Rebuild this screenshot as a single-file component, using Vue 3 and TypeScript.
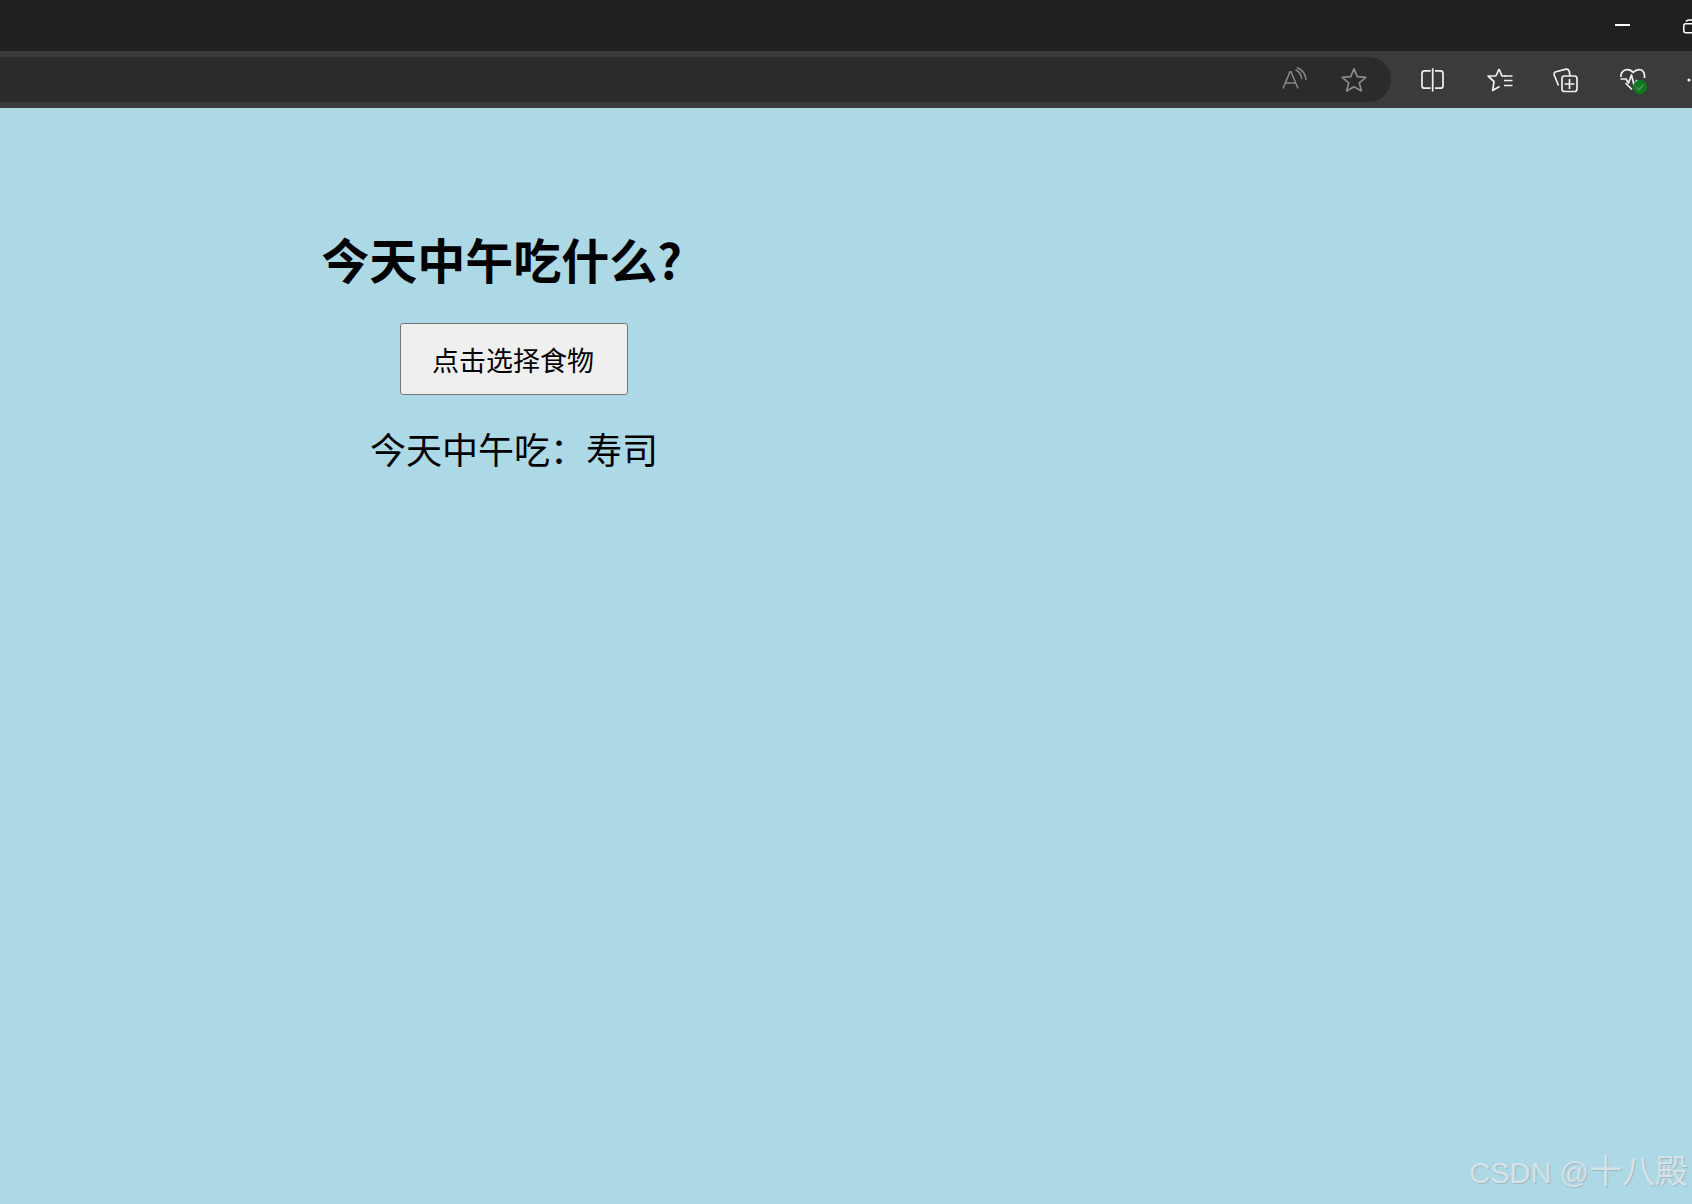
<script setup lang="ts">
const title = '今天中午吃什么?'
const food = '寿司'
const colon = '\uFF1A'
</script>

<template>
  <div class="window">
    <header class="titlebar">
      <span class="minimize"></span>
      <svg class="restore" width="9" height="16" viewBox="0 0 9 16" fill="none" stroke="#fff" stroke-width="1.5">
        <rect x="0.8" y="4.800" width="20" height="9" rx="2" />
        <path d="M3 2.500q1-1.600 3-1.600h6" />
      </svg>
    </header>
    <nav class="toolbar">
      <div class="address">
        <svg class="pill-icon" width="28" height="28" viewBox="0 0 28 28" fill="none" stroke="#8a8a8a" stroke-width="1.500">
          <path d="M3 22.500 10 5.800h1L18 22.500M5.500 17h10.500" />
          <path d="M16 4q5 2.500 5.700 8.500M17.300 1.800q7.500 3 8.700 11.500" stroke-linecap="round" />
        </svg>
        <svg class="pill-icon star" width="28" height="28" viewBox="0 0 28 28" fill="none" stroke="#8a8a8a" stroke-width="1.700" stroke-linejoin="round">
          <path d="M14 2.800 17.300 10.600 25.800 11.400 19.300 16.900 21.400 25 14 20.800 6.600 25 8.700 16.900 2.200 11.400 10.700 10.600Z" />
        </svg>
      </div>
      <div class="tools">
        <svg width="28" height="28" viewBox="0 0 28 28" fill="none" stroke="#f0f0f0" stroke-width="1.700">
          <path d="M12.700 4.800H6.500Q4 4.800 4 7.300V19.700Q4 22.200 6.500 22.200H12.700M17 4.800H22.500Q25 4.800 25 7.300V19.700Q25 22.200 22.500 22.200H17M14.700 2.200V25.500" />
        </svg>
        <svg class="fav" width="28" height="28" viewBox="0 0 28 28" fill="none" stroke="#f0f0f0" stroke-width="1.700" stroke-linejoin="round">
          <path d="M13 3 16 10H19.500M10 10H2L8 15.500 6.700 24.500 13.500 20.500M13 3 10 10" />
          <path d="M18 10H26.500M18 14.500H26.500M18 19.500H26.500" />
        </svg>
        <svg class="coll" width="28" height="28" viewBox="0 0 28 28" fill="none" stroke="#f0f0f0" stroke-width="1.700">
          <path d="M7.500 19.500 3.200 9Q2.500 6.500 5 5.800L15 3.200Q17.500 2.800 18.300 5.500L19 10" />
          <rect x="11" y="10" width="15" height="15.500" rx="2.500" fill="#3b3b3b" />
          <path d="M18.500 13V23M13.500 18H23.500" />
        </svg>
        <span class="health">
          <svg width="28" height="28" viewBox="0 0 28 28" fill="none" stroke="#f0f0f0" stroke-width="1.700" stroke-linejoin="round">
            <path d="M2 11Q1.500 6 6 4 11 2.500 14 6.500 18 2.500 22.500 4 26 6 25.500 12M6.500 17 13 23.500M1.500 13H7L9.500 17 12.500 9 15 19 18 14" />
          </svg>
          <span class="badge">
            <svg width="14" height="14" viewBox="0 0 14 14" fill="none" stroke="#4f8a55" stroke-width="1.800">
              <path d="M3.500 7.500 6 10 10.500 4.500" />
            </svg>
          </span>
        </span>
        <svg width="28" height="28" viewBox="0 0 28 28" fill="#f0f0f0">
          <circle cx="3" cy="14" r="1.600" />
          <circle cx="12" cy="14" r="1.600" />
          <circle cx="21" cy="14" r="1.600" />
        </svg>
      </div>
    </nav>
    <main class="page">
      <section class="content">
        <h1 class="heading">{{ title }}</h1>
        <button class="pick" type="button">点击选择食物</button>
        <p class="result">今天中午吃{{ colon }}{{ food }}</p>
      </section>
      <span class="watermark"><span class="mark-latin">CSDN @</span>十八殿</span>
    </main>
  </div>
</template>

<style>
html,
body {
  margin: 0;
  overflow: hidden;
}
</style>

<style scoped>
.window {
  width: 1692px;
  height: 1204px;
  display: flex;
  flex-direction: column;
  overflow: hidden;
  font-family: "Noto Sans CJK SC", "Liberation Sans", sans-serif;
}
.titlebar {
  height: 51px;
  flex: none;
  background: #202020;
  display: flex;
  align-items: center;
  justify-content: flex-end;
  gap: 53px;
  box-sizing: border-box;
}
.minimize {
  width: 15px;
  height: 2px;
  background: #fff;
  margin-bottom: 2px;
}
.restore {
  flex: none;
  margin-top: 2px;
}
.toolbar {
  height: 57px;
  flex: none;
  background: #3b3b3b;
  display: flex;
  align-items: center;
  overflow: hidden;
}
.address {
  width: 1391px;
  height: 45px;
  flex: none;
  box-sizing: border-box;
  background: #2b2b2b;
  border-radius: 0 23px 23px 0;
  display: flex;
  align-items: center;
  justify-content: flex-end;
  gap: 32px;
  padding-right: 23px;
}
.pill-icon {
  flex: none;
}
.tools {
  display: flex;
  align-items: center;
  gap: 39px;
  padding-left: 27px;
}
.tools > svg {
  flex: none;
}
.tools > .fav {
  margin-left: 1px;
}
.tools > .coll {
  margin-left: -2px;
}
.health {
  position: relative;
  width: 28px;
  height: 28px;
  flex: none;
  margin-left: 1px;
}
.health > svg {
  display: block;
}
.badge {
  position: absolute;
  right: 0;
  bottom: 0;
  width: 14px;
  height: 14px;
  border-radius: 50%;
  background: #0e7a1f;
}
.badge svg {
  display: block;
}
.page {
  flex: 1;
  position: relative;
  background: #add8e6;
}
.content {
  width: 1028px;
  display: flex;
  flex-direction: column;
  align-items: center;
  padding-top: 118px;
}
.heading {
  margin: 0;
  padding-right: 25px;
  font-size: 48px;
  font-weight: 700;
  line-height: 64px;
  color: #000;
}
.pick {
  margin-top: 33px;
  width: 228px;
  height: 72px;
  padding: 0 2px 0 0;
  font-family: inherit;
  font-size: 27px;
  color: #000;
  background: #efefef;
  border: 1px solid #767676;
  border-radius: 3px;
}
.result {
  margin: 26px 0 0;
  font-size: 36px;
  line-height: 54px;
  color: #000;
}
.watermark {
  position: absolute;
  right: 4px;
  bottom: 11px;
  font-family: "Liberation Sans", "Noto Sans CJK SC", sans-serif;
  font-size: 33px;
  line-height: 40px;
  color: #d5e2e8;
  text-shadow: 1px 1px 1px #9fb6c0;
}
.mark-latin {
  font-size: 29px;
}
</style>
